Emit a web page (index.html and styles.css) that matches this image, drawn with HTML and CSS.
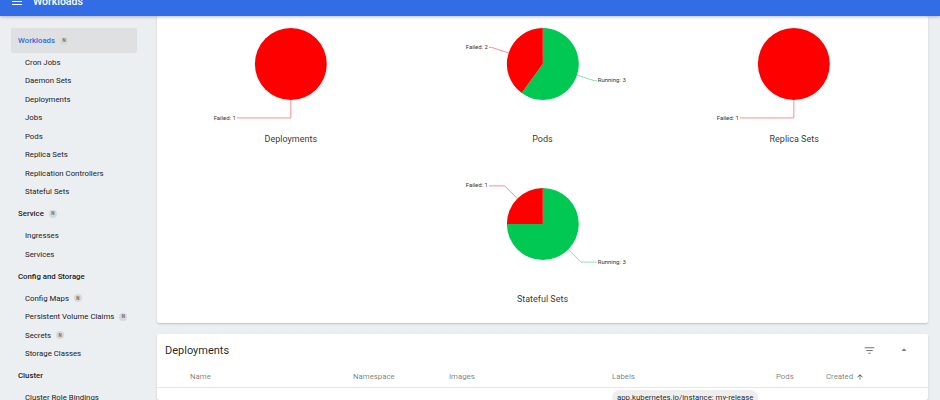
FILE: index.html
```
<!DOCTYPE html>
<html lang="en">
<head>
<meta charset="utf-8">
<title>Workloads</title>
<link rel="stylesheet" href="styles.css">
</head>
<body>
<header class="topbar">
  <div class="topbar-row">
    <span class="burger"><span></span><span></span><span></span></span>
    <span class="topbar-title">Workloads</span>
  </div>
</header>
<div class="layout">
  <nav class="sidebar">
    <div class="nav-head selected">Workloads <span class="badge">N</span></div>
    <div class="nav-item">Cron Jobs</div>
    <div class="nav-item">Daemon Sets</div>
    <div class="nav-item">Deployments</div>
    <div class="nav-item">Jobs</div>
    <div class="nav-item">Pods</div>
    <div class="nav-item">Replica Sets</div>
    <div class="nav-item">Replication Controllers</div>
    <div class="nav-item">Stateful Sets</div>
    <div class="nav-head">Service <span class="badge">N</span></div>
    <div class="nav-item">Ingresses</div>
    <div class="nav-item">Services</div>
    <div class="nav-head">Config and Storage</div>
    <div class="nav-item">Config Maps <span class="badge">N</span></div>
    <div class="nav-item">Persistent Volume Claims <span class="badge">N</span></div>
    <div class="nav-item">Secrets <span class="badge">N</span></div>
    <div class="nav-item">Storage Classes</div>
    <div class="nav-head">Cluster</div>
    <div class="nav-item">Cluster Role Bindings</div>
  </nav>
  <main class="main">
    <section class="card charts">
      <div class="chart">
        <svg class="pie" viewBox="0 0 252 108" width="252" height="108">
          <circle cx="126" cy="44" r="36" fill="#ff0000"/>
          <polyline class="lead red" points="126,80 126,98 72,98"/>
          <text class="plabel" x="71" y="98" text-anchor="end">Failed: 1</text>
        </svg>
        <div class="chart-title">Deployments</div>
      </div>
      <div class="chart">
        <svg class="pie" viewBox="0 0 252 108" width="252" height="108">
          <path d="M126,44 L126,8 A36,36 0 1,1 104.84,73.12 Z" fill="#00c853"/>
          <path d="M126,44 L126,8 A36,36 0 0,0 104.84,73.12 Z" fill="#ff0000"/>
          <polyline class="lead red" points="91.76,32.88 74.64,27.31 72,27.31"/>
          <text class="plabel" x="71" y="27.31" text-anchor="end">Failed: 2</text>
          <polyline class="lead green" points="160.24,55.12 177.36,60.69 180,60.69"/>
          <text class="plabel" x="181" y="60.69">Running: 3</text>
        </svg>
        <div class="chart-title">Pods</div>
      </div>
      <div class="chart">
        <svg class="pie" viewBox="0 0 252 108" width="252" height="108">
          <circle cx="126" cy="44" r="36" fill="#ff0000"/>
          <polyline class="lead red" points="126,80 126,98 72,98"/>
          <text class="plabel" x="71" y="98" text-anchor="end">Failed: 1</text>
        </svg>
        <div class="chart-title">Replica Sets</div>
      </div>
      <div class="chart second-row">
        <svg class="pie" viewBox="0 0 252 108" width="252" height="108">
          <path d="M126,44 L126,8 A36,36 0 1,1 90,44 Z" fill="#00c853"/>
          <path d="M126,44 L126,8 A36,36 0 0,0 90,44 Z" fill="#ff0000"/>
          <polyline class="lead red" points="100.54,18.54 87.82,5.82 72,5.82"/>
          <text class="plabel" x="71" y="5.82" text-anchor="end">Failed: 1</text>
          <polyline class="lead green" points="151.46,69.46 164.18,82.18 180,82.18"/>
          <text class="plabel" x="181" y="82.18">Running: 3</text>
        </svg>
        <div class="chart-title">Stateful Sets</div>
      </div>
    </section>
    <section class="card table-card">
      <div class="table-head">
        <h2 class="table-title">Deployments</h2>
        <div class="tools">
          <svg class="tool-icon" viewBox="0 0 24 24" width="13" height="13"><path d="M10 18h4v-2h-4v2zM3 6v2h18V6H3zm3 7h12v-2H6v2z"/></svg>
          <svg class="tool-icon" viewBox="0 0 24 24" width="12" height="12"><path d="M7 14l5-5 5 5z"/></svg>
        </div>
      </div>
      <div class="row header-row">
        <div>Name</div>
        <div>Namespace</div>
        <div>Images</div>
        <div>Labels</div>
        <div>Pods</div>
        <div class="created">Created <svg viewBox="0 0 24 24" width="8" height="8"><path d="M4 12l1.41 1.41L11 7.83V20h2V7.83l5.58 5.59L20 12l-8-8-8 8z"/></svg></div>
      </div>
      <div class="row data-row">
        <div></div>
        <div></div>
        <div></div>
        <div><span class="chip">app.kubernetes.io/instance: my-release</span></div>
        <div></div>
        <div></div>
      </div>
    </section>
  </main>
</div>
</body>
</html>
```
FILE: styles.css
```
* { box-sizing: border-box; }
html, body { margin: 0; padding: 0; }
body {
  width: 940px;
  height: 400px;
  overflow: hidden;
  font-family: Roboto, "Noto Sans", "Liberation Sans", sans-serif;
  background: #eceff1;
  color: rgba(0,0,0,.87);
}
.topbar {
  height: 16px;
  overflow: hidden;
  background: #326de6;
  position: relative;
  z-index: 2;
  box-shadow: 0 1px 3px rgba(0,0,0,.25);
}
.topbar-row {
  height: 24px;
  margin-top: -10.5px;
  display: flex;
  align-items: center;
  padding-left: 12px;
  color: #fff;
}
.burger {
  display: flex;
  flex-direction: column;
  gap: 2px;
  width: 10px;
  margin-right: 11px;
}
.burger span {
  display: block;
  height: 1.3px;
  background: #fff;
}
.topbar-title {
  font-size: 10.5px;
  font-weight: 500;
}
.layout {
  display: flex;
  height: 384px;
}
.sidebar {
  width: 155px;
  flex: none;
  padding: 12px 0 0 11px;
  background: #eceff1;
  font-size: 7.8px;
}
.nav-head {
  width: 126px;
  height: 18.5px;
  margin: 3.5px 0;
  padding-left: 7px;
  display: flex;
  align-items: center;
  font-weight: 500;
  color: #202124;
}
.nav-head.selected {
  height: 25px;
  margin: 0;
  background: #dfe0e1;
  border-radius: 2px;
  color: #326de6;
}
.nav-item {
  height: 18.5px;
  padding-left: 14px;
  display: flex;
  align-items: center;
  color: #202124;
}
.badge {
  display: inline-flex;
  align-items: center;
  justify-content: center;
  width: 8px;
  height: 8px;
  margin-left: 5px;
  border-radius: 50%;
  background: #d6d8d9;
  color: #6b6b6b;
  font-size: 4.5px;
  font-weight: 700;
}
.main {
  flex: 1;
  padding: 0 12px 0 2px;
  display: flex;
  flex-direction: column;
  gap: 11px;
}
.card {
  background: #fff;
  border-radius: 2px;
  box-shadow: 0 1px 2px rgba(0,0,0,.2);
}
.charts {
  height: 307px;
  padding: 3.5px 8px 0;
  display: grid;
  grid-template-columns: repeat(3, 1fr);
  row-gap: 32.5px;
  align-content: start;
}
.chart {
  display: flex;
  flex-direction: column;
  align-items: center;
}
.second-row { grid-column: 2; }
.pie { display: block; width: 100%; }
.lead { fill: none; stroke-width: 1; }
.lead.red { stroke: #ff8c8c; }
.lead.green { stroke: #8fe0b0; }
.plabel {
  font-size: 6px;
  fill: #333;
  dominant-baseline: middle;
}
.chart-title {
  margin-top: 3.5px;
  height: 16px;
  line-height: 16px;
  font-size: 9px;
  color: rgba(0,0,0,.82);
}
.table-card {
  flex: 1;
  overflow: hidden;
}
.table-head {
  height: 32px;
  display: flex;
  align-items: center;
  justify-content: space-between;
  padding: 0 18px 0 8px;
}
.table-title {
  margin: 0;
  font-size: 11px;
  font-weight: 400;
  color: rgba(0,0,0,.87);
}
.tools {
  display: flex;
  align-items: center;
  gap: 22px;
}
.tool-icon { fill: #757575; display: block; }
.row {
  display: grid;
  grid-template-columns: 163px 96px 163px 164px 50px 1fr;
  padding-left: 33px;
}
.header-row {
  height: 22px;
  align-items: center;
  font-size: 7.8px;
  color: rgba(0,0,0,.54);
  border-bottom: 1px solid #e6e6e6;
}
.created { display: flex; align-items: center; gap: 3px; }
.created svg { fill: rgba(0,0,0,.7); }
.data-row {
  padding-top: 2px;
  font-size: 7.8px;
}
.chip {
  display: inline-block;
  padding: 2px 5px;
  border-radius: 8px;
  background: #eeeeee;
  color: rgba(0,0,0,.87);
  line-height: 11px;
}
```
